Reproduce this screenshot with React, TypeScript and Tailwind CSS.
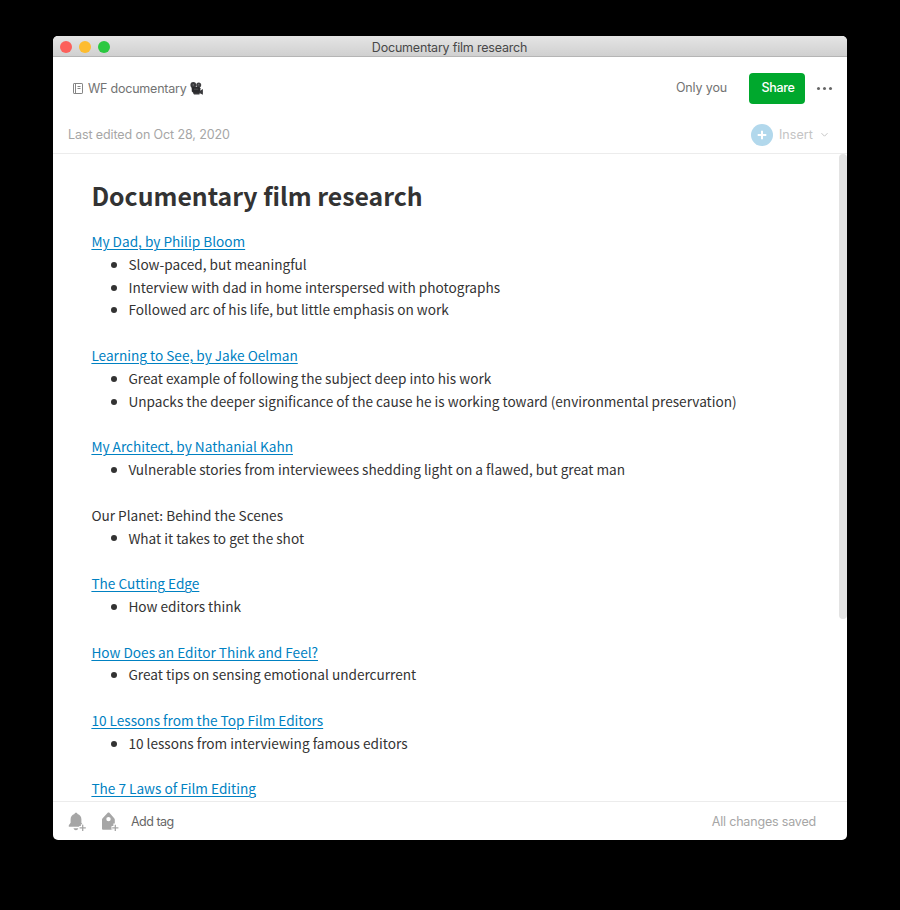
import React from "react";

type Section = { title: string; link: boolean; items: string[] };

const sections: Section[] = [
  {
    title: "My Dad, by Philip Bloom",
    link: true,
    items: [
      "Slow-paced, but meaningful",
      "Interview with dad in home interspersed with photographs",
      "Followed arc of his life, but little emphasis on work",
    ],
  },
  {
    title: "Learning to See, by Jake Oelman",
    link: true,
    items: [
      "Great example of following the subject deep into his work",
      "Unpacks the deeper significance of the cause he is working toward (environmental preservation)",
    ],
  },
  {
    title: "My Architect, by Nathanial Kahn",
    link: true,
    items: ["Vulnerable stories from interviewees shedding light on a flawed, but great man"],
  },
  { title: "Our Planet: Behind the Scenes", link: false, items: ["What it takes to get the shot"] },
  { title: "The Cutting Edge", link: true, items: ["How editors think"] },
  {
    title: "How Does an Editor Think and Feel?",
    link: true,
    items: ["Great tips on sensing emotional undercurrent"],
  },
  {
    title: "10 Lessons from the Top Film Editors",
    link: true,
    items: ["10 lessons from interviewing famous editors"],
  },
  { title: "The 7 Laws of Film Editing", link: true, items: [] },
];

function NotebookIcon() {
  return (
    <svg width="11" height="13" viewBox="0 0 11 13" fill="none" stroke="#858585" strokeWidth="1">
      <rect x="1.5" y="1.5" width="9" height="10" rx=".6" />
      <path d="M3.5 1.500v10M5.500 4.500h3M5.500 6.500h3" />
    </svg>
  );
}

function MovieCamera() {
  return (
    <svg width="13" height="13" viewBox="0 0 13 13">
      <circle cx="3.300" cy="3" r="2.900" fill="#3a3a3d" />
      <circle cx="8.700" cy="2.900" r="2.500" fill="#404043" />
      <path d="M1.600 5h8l.8 1.200v3.600l-.8 1.600H4L1.800 9.600z" fill="#2b2b2e" />
      <path d="M9.400 9.200 12.900 7v5.800L9.400 10.900z" fill="#39393c" />
      <path d="M3 10.800h6.500v1.600H4z" fill="#39393c" />
      <circle cx="3.300" cy="2.900" r=".8" fill="#6c6c70" />
      <circle cx="8.700" cy="2.800" r=".7" fill="#6c6c70" />
      <path d="M4 7.200h4.200" stroke="#5c5c60" strokeWidth=".7" />
    </svg>
  );
}

function ReminderIcon() {
  return (
    <svg width="20" height="20" viewBox="0 0 20 20">
      <path
        d="M8 .8c.8 0 1.400.5 1.500 1.200 2.500.7 3.900 2.600 3.900 5.200v3.600l1.800 2.500v1.500H.8v-1.500l1.800-2.500V7.200c0-2.600 1.400-4.500 3.900-5.200C6.600 1.300 7.200.8 8 .8z"
        fill="#a6a6a6"
      />
      <path d="M5.500 16.300h4.800c-.3 1.300-1.200 2-2.400 2s-2.100-.7-2.400-2z" fill="#a6a6a6" />
      <path d="M14.700 12.300v7M11.200 15.800h7" stroke="#fff" strokeWidth="3.600" />
      <path d="M14.700 12.700v6.200M11.600 15.800h6.200" stroke="#a6a6a6" strokeWidth="1.300" />
    </svg>
  );
}

function TagIcon() {
  return (
    <svg width="20" height="20" viewBox="0 0 20 20">
      <path
        fillRule="evenodd"
        d="M7.500.9c.7-.6 1.400-.6 2.100 0l4.600 5.400c.4.500.6.900.6 1.500v8.700c0 .8-.5 1.300-1.300 1.300H3.300c-.8 0-1.300-.5-1.300-1.300V7.800c0-.6.200-1 .6-1.500zM8.500 4.900a2.200 2.200 0 1 0 0 4.400 2.200 2.200 0 0 0 0-4.400z"
        fill="#a6a6a6"
      />
      <path d="M15.300 11.500v8M11.500 15.800h8" stroke="#fff" strokeWidth="3.800" />
      <path d="M15.300 12.700v6.200M12.200 15.800h6.200" stroke="#a6a6a6" strokeWidth="1.300" />
    </svg>
  );
}

export default function App() {
  return (
    <div className="h-[910px] w-[900px] overflow-hidden bg-black pt-9 pl-[53px] font-['Inter',sans-serif]">
      <main className="flex h-[804px] w-[794px] flex-col overflow-hidden rounded-[5px] bg-white">
        <header className="grid h-[21px] shrink-0 grid-cols-[1fr_auto_1fr] items-center border-b border-[#b5b5b5] bg-linear-to-b from-[#e5e5e5] to-[#d0d0d0]">
          <div className="flex gap-[7px] pt-px pl-[7px]">
            <span className="size-3 rounded-full bg-[#fc605b]" />
            <span className="size-3 rounded-full bg-[#fdbc2f]" />
            <span className="size-3 rounded-full bg-[#2bc840]" />
          </div>
          <h1 className="mr-px pt-[3px] text-[12.5px] leading-[17px] tracking-[-0.2px] text-[#484848]">Documentary film research</h1>
        </header>

        <div className="flex h-[62px] shrink-0 items-center pl-[19px] pr-[15px] text-[12.5px] tracking-[-0.22px] text-[#737373]">
          <NotebookIcon />
          <span className="ml-[5px] mr-[3px] pt-[2px]">WF documentary</span>
          <MovieCamera />
          <span className="ml-auto pt-px tracking-[-0.15px]">Only you</span>
          <button className="ml-[22px] h-[31px] w-14 rounded-[4px] bg-[#00a82d] pt-px pl-[2px] text-[12.5px] font-medium tracking-[-0.3px] text-white">
            Share
          </button>
          <span className="ml-3 flex gap-[3px]">
            <i className="size-[3px] rounded-full bg-[#666]" />
            <i className="size-[3px] rounded-full bg-[#666]" />
            <i className="size-[3px] rounded-full bg-[#666]" />
          </span>
        </div>

        <div className="flex h-[35px] shrink-0 items-center border-b border-[#ececec] pb-[3px] pl-[15px] pr-[18px] text-[12.5px] tracking-[-0.1px] text-[#a6a6a6]">
          <span className="pt-[2px]">Last edited on Oct 28, 2020</span>
          <button className="ml-auto flex items-center text-[#c4c4c4]">
            <svg width="22" height="22" viewBox="0 0 22 22">
              <circle cx="11" cy="11" r="11" fill="#b2d8ec" />
              <path d="M11 6.700v8.600M6.700 11h8.600" stroke="#fff" strokeWidth="2" />
            </svg>
            <span className="ml-[6px] pt-px tracking-[0.08px]">Insert</span>
            <svg className="ml-[7px]" width="9" height="6" viewBox="0 0 9 6" fill="none" stroke="#c4c4c4">
              <path d="m1.500 1.200 3 3 3-3" />
            </svg>
          </button>
        </div>

        <section className="flex min-h-0 flex-1 overflow-hidden font-['Noto_Sans_CJK_SC',sans-serif] text-[#333]">
          <article className="min-w-0 flex-1 pl-[38.400px] pt-[21px]">
            <h2 className="mb-[15px] h-10 whitespace-nowrap text-[24.800px] leading-10 font-bold">
              Documentary film research
            </h2>
            {sections.map((section) => (
              <div key={section.title} className="mb-[22.810px] text-[13.630px] leading-[22.810px] whitespace-nowrap">
                {section.link ? (
                  <a className="block w-fit text-[#0081c2] underline decoration-1 underline-offset-2">{section.title}</a>
                ) : (
                  <p>{section.title}</p>
                )}
                <ul>
                  {section.items.map((item) => (
                    <li key={item} className="flex items-center pl-[20px]">
                      <span className="mt-px mr-[11px] size-[6px] shrink-0 rounded-full bg-[#333]" />
                      {item}
                    </li>
                  ))}
                </ul>
              </div>
            ))}
          </article>
          <div className="w-2 shrink-0">
            <div className="h-[465px] rounded-[4px] bg-[#e3e3e3]" />
          </div>
        </section>

        <footer className="flex h-[39px] shrink-0 items-center border-t border-[#ececec] pt-[2px] pl-[15px] pr-[31px] text-[12.5px]">
          <ReminderIcon />
          <span className="ml-[12px]"><TagIcon /></span>
          <span className="ml-[11px] pt-px tracking-[-0.5px] text-[#666]">Add tag</span>
          <span className="ml-auto tracking-[-0.18px] text-[#a6a6a6]">All changes saved</span>
        </footer>
      </main>
    </div>
  );
}
